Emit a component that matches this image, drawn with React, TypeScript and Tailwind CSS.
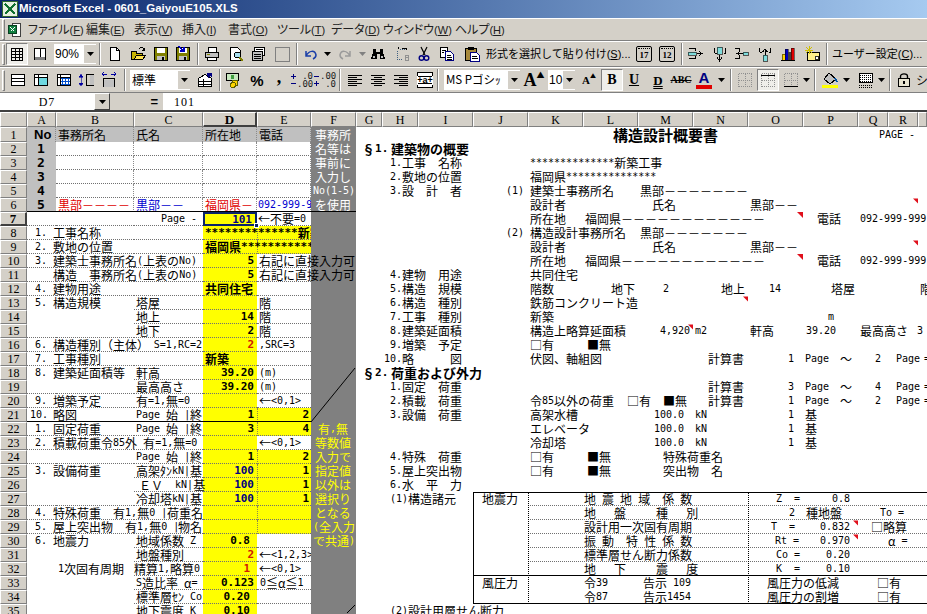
import React from "react";

const starts = [0, 27, 56, 134, 203, 257, 311, 356, 382, 418, 473, 528, 583, 638, 693, 748, 803, 858, 888, 918];
const letters = ["", "A", "B", "C", "D", "E", "F", "G", "H", "I", "J", "K", "L", "M", "N", "O", "P", "Q", "R", ""];
const colOf = (x: number) => {
  let i = 0;
  for (let k = 0; k < starts.length; k++) if (x >= starts[k]) i = k;
  return i;
};

function Mixed({ t, bold }: { t: string; bold?: boolean }) {
  const parts = t.split(/([\x20-\x7e]+)/).filter(Boolean);
  return (
    <>
      {parts.map((p, i) =>
        /^[\x20-\x7e]+$/.test(p) ? (
          <span key={i} className={bold ? "font-['DejaVu_Sans_Mono'] text-[11px] font-bold" : "font-['DejaVu_Sans_Mono'] text-[10px]"}>{p}</span>
        ) : (
          <span key={i}>{p}</span>
        )
      )}
    </>
  );
}

type TP = { r: number; x: number; t?: string; c?: string; b?: boolean; children?: React.ReactNode };
function T({ r, x, t, c, b, children }: TP) {
  const i = colOf(x);
  return (
    <div
      className={"flex items-center whitespace-pre min-w-0 leading-[14px] " + (b ? "font-bold " : "") + (c || "")}
      style={{ gridRow: r + 1, gridColumn: i + 1, paddingLeft: x - starts[i] }}
    >
      {t ? <Mixed t={t} bold={b} /> : children}
    </div>
  );
}
function R({ r, x, t, c, b }: TP) {
  const i = colOf(x - 1);
  const end = i + 1 < starts.length ? starts[i + 1] : 927;
  return (
    <div
      className={"flex items-center justify-end whitespace-pre min-w-0 leading-[14px] " + (b ? "font-bold " : "") + (c || "")}
      style={{ gridRow: r + 1, gridColumn: i + 1, paddingRight: end - x }}
    >
      <Mixed t={t || ""} bold={b} />
    </div>
  );
}
function Tri({ r, x }: { r: number; x: number }) {
  return (
    <T r={r} x={x} c="items-start">
      <svg width="6" height="6" viewBox="0 0 6 6" className="block"><path d="M0 0H6V6Z" fill="#e0101c" /></svg>
    </T>
  );
}

/* background of one sheet cell */
function Bg({ r, col, c }: { r: number; col: number; c: string }) {
  return <div className={"min-w-0 " + c} style={{ gridRow: r + 1, gridColumn: col + 1 }} />;
}

const Sep = ({ c = "" }: { c?: string }) => <div className={"w-[2px] h-[22px] shrink-0 border-l border-r border-l-[#808080] border-r-white " + c} />;
const Grip = ({ c = "" }: { c?: string }) => <div className={"w-[3px] h-[21px] shrink-0 border border-t-white border-l-white border-r-[#808080] border-b-[#808080] " + c} />;
const Slot = ({ c = "", children }: { c?: string; children?: React.ReactNode }) => <div className={"h-[22px] shrink-0 flex items-center justify-center " + (c.includes("w-[") ? c : "w-[22px] " + c)}>{children}</div>;
const Pressed = ({ c = "", children }: { c?: string; children?: React.ReactNode }) => (
  <div className={"w-[22px] h-[22px] shrink-0 flex items-center justify-center bg-[#efeeea] border border-t-[#808080] border-l-[#808080] border-r-white border-b-white " + c}>{children}</div>
);
const Ico = ({ children, w = 16 }: { children: React.ReactNode; w?: number }) => (
  <svg width={w} height="16" viewBox={`0 0 ${w} 16`} fill="none" shapeRendering="crispEdges" className="block">{children}</svg>
);
const Drop = () => <svg width="7" height="4" viewBox="0 0 7 4" className="block"><path d="M0 0H7L3.5 4Z" fill="#000" /></svg>;
const DropG = () => <svg width="7" height="4" viewBox="0 0 7 4" className="block"><path d="M0 0H7L3.5 4Z" fill="#808080" /></svg>;
const ComboBtn = () => <div className="w-[12px] h-[18px] bg-[#d4d0c8] flex items-center justify-center shrink-0"><Drop /></div>;

const IGrid = () => <Ico><path d="M2 2.5H14M2 5.5H14M2 8.5H14M2 11.5H14M2 14.5H14M2.5 2V15M6.5 2V15M10.5 2V15M13.5 2V15" stroke="#000" /></Ico>;
const IBook = () => <Ico><rect x="2.5" y="2.5" width="11" height="11" fill="#fff" stroke="#000" /><path d="M8 2V11" stroke="#000" /><rect x="3" y="11" width="10" height="3" fill="#808080" /></Ico>;
const INew = () => <Ico><path d="M3.5 1.5H9.5L12.5 4.5V14.5H3.5Z" fill="#fff" stroke="#000" /><path d="M9.5 1.5V4.5H12.5" stroke="#000" /></Ico>;
const IOpen = () => <Ico><path d="M1.5 5.5H6.5V7.5H12.5V13.5H1.5Z" fill="#c8b400" stroke="#000" /><path d="M4 13.5L6.5 9.5H15.5L12.5 13.5Z" fill="#ffe14d" stroke="#000" /><path d="M9 3C11 1 13 1 14 3.5M14 1.5V4H11.5" stroke="#000" /></Ico>;
const IFloppy = () => <><rect x="1.5" y="1.5" width="13" height="13" fill="#808000" stroke="#000" /><rect x="4" y="2" width="8" height="5" fill="#fff" /><rect x="4" y="10" width="8" height="4" fill="#c0c0c0" /><rect x="9" y="11" width="2" height="3" fill="#000" /></>;
const ISave = () => <Ico><IFloppy /></Ico>;
const ISaveAs = () => <Ico><IFloppy /><path d="M3 0L9 5M9 1V5H5" stroke="#0000c0" strokeWidth="1.6" /></Ico>;
const IPrint = () => <Ico><path d="M4.5 1.5H12.5V6.5H4.5Z" fill="#fff" stroke="#000" /><path d="M1.5 6.5H14.5V11.5H1.5Z" fill="#c0c0c0" stroke="#000" /><path d="M3.5 11.5H12.5V14.5H3.5Z" fill="#fff" stroke="#000" /><path d="M3 8.5H6" stroke="#808000" /></Ico>;
const IPrev = () => <Ico><path d="M2.5 1.5H9.5L12.5 4.5V14.5H2.5Z" fill="#fff" stroke="#000" /><circle cx="9.5" cy="9" r="3" fill="#a8e0f0" stroke="#000" /><path d="M11.5 11.5L15 15" stroke="#808000" strokeWidth="2" /></Ico>;
const IStack = () => <Ico><path d="M4.5 1.5H14.5V9.5H4.5Z" fill="#fff" stroke="#000" /><path d="M2.5 5.5H12.5V14.5H2.5Z" fill="#c0c0c0" stroke="#000" /><path d="M4 8H11M4 10H11M4 12H11M6 3.5H13" stroke="#000" /></Ico>;
const IUndo = ({ col = "#1a3ea8" }: { col?: string }) => <Ico><path d="M3 5V10H8M3 10C6 4 12 4 13 9C13 11 12 12 10 13" stroke={col} strokeWidth="1.5" fill="none" shapeRendering="auto" /></Ico>;
const IRedo = () => <Ico><path d="M13 5V10H8M13 10C10 4 4 4 3 9C3 11 4 12 6 13" stroke="#9a9a9a" strokeWidth="1.5" fill="none" shapeRendering="auto" /></Ico>;
const IBino = () => <Ico><path d="M3 3H6V6H10V3H13V6L15 13H9.5V8H6.5V13H1L3 6Z" fill="#000" /><rect x="3" y="10" width="2" height="2" fill="#c0c0c0" /><rect x="11" y="10" width="2" height="2" fill="#c0c0c0" /></Ico>;
const ISel = () => <Ico><path d="M3 8A5 5 0 0 1 12 5" stroke="#406080" strokeDasharray="1 1" /><path d="M3 9V13H8" stroke="#406080" strokeDasharray="1 1" /><path d="M8 2H12V4M4 3V1" stroke="#000" /><path d="M11 9H14V14H11ZM11 11.5H14" stroke="#909090" /></Ico>;
const IScis = () => <Ico><path d="M5 1L9 9M11 1L7 9" stroke="#000" strokeWidth="1.2" shapeRendering="auto" /><circle cx="5.5" cy="12" r="2.3" stroke="#000080" strokeWidth="1.4" shapeRendering="auto" /><circle cx="10.5" cy="12" r="2.3" stroke="#000080" strokeWidth="1.4" shapeRendering="auto" /></Ico>;
const ICopy = () => <Ico><path d="M1.5 1.5H8.5V11.5H1.5Z" fill="#fff" stroke="#000" /><path d="M6.5 5.5H11.5L14.5 8.5V14.5H6.5Z" fill="#fff" stroke="#000080" /><path d="M3 4H7M3 6H5M8 9H12M8 11H13M8 13H13" stroke="#000" /></Ico>;
const IPaste = () => <Ico><path d="M1.5 2.5H12.5V14.5H1.5Z" fill="#a88a3c" stroke="#000" /><rect x="4" y="1" width="6" height="3" fill="#000" /><path d="M6.5 6.5H12.5L15.5 9.5V15.5H6.5Z" fill="#fff" stroke="#000080" /><path d="M8 10H13M8 12H14" stroke="#000" /></Ico>;
const ICal = ({ n }: { n: string }) => (
  <div className="w-[16px] h-[16px] border border-black bg-[#d4d0c8] relative flex items-center justify-center rounded-[2px] font-['Liberation_Serif'] font-bold text-[9px] leading-none">
    <div className="absolute top-[1px] left-[1px] right-[1px] h-[2px] border-t border-dotted border-black" />
    <span className="mt-[3px]">{n}</span>
  </div>
);
const IInsR = () => <Ico><path d="M1.5 2.5H8.5M1.5 12.5H8.5M8.5 2.5V5M8.5 10V12.5" stroke="#000" /><rect x="1" y="6" width="8" height="3" fill="#7fdcdc" stroke="#000" strokeWidth=".6" /><path d="M10 7.5H14M12 5.5L15 7.5L12 9.5" stroke="#000" /></Ico>;
const IInsD = () => <Ico><path d="M2.5 1.5V7M13.5 1.5V7M2.5 7H4.5M11.5 7H13.5" stroke="#000" /><rect x="5" y="1" width="5" height="7" fill="#7fdcdc" stroke="#000" strokeWidth=".6" /><path d="M7.5 9V14M5 11.5L7.5 15L10 11.5" stroke="#000" /></Ico>;
const IOutL = () => <Ico><path d="M6.5 2.5H1.5M6.5 12.5H1.5M6.5 2.5V5M6.5 10V12.5" stroke="#000" /><rect x="10" y="6" width="5" height="3" fill="#7fdcdc" stroke="#000" strokeWidth=".6" /><path d="M10 7.5H4M7 5.5L4 7.5L7 9.5" stroke="#000" /></Ico>;
const IOutU = () => <Ico><path d="M2.5 1.5V6M13.5 1.5V6M2.5 6H4.5M11.5 6H13.5" stroke="#000" /><rect x="6" y="9" width="4" height="6" fill="#7fdcdc" stroke="#000" strokeWidth=".6" /><path d="M8 4V9M5.5 6L8 3L10.5 6" stroke="#000" /></Ico>;
const IChart = () => <Ico><rect x="1" y="14" width="14" height="1" fill="#000" /><rect x="2" y="8" width="3" height="6" fill="#ffd500" stroke="#000" strokeWidth=".5" /><rect x="5" y="3" width="3" height="11" fill="#0000c0" stroke="#000" strokeWidth=".5" /><rect x="8" y="6" width="3" height="8" fill="#404040" /><rect x="11" y="2" width="3" height="12" fill="#e00000" stroke="#000" strokeWidth=".5" /></Ico>;
const IStar = () => <Ico><rect x="3.5" y="6.5" width="12" height="8" fill="#fff08a" stroke="#000" /><path d="M5 0V8M1 4H9M2 1L8 7M8 1L2 7" stroke="#d0c000" /><rect x="11" y="10" width="3" height="3" fill="#fff" stroke="#000" strokeWidth=".8" /></Ico>;
const IRows = () => <Ico><rect x="1.5" y="2.5" width="13" height="11" fill="#fff" stroke="#000" /><path d="M2 6.5H14M2 9.5H14" stroke="#000" /></Ico>;
const ICyan = () => <Ico><rect x="1.5" y="2.5" width="13" height="11" fill="#fff" stroke="#000" /><rect x="5" y="6" width="9" height="7" fill="#6fd8e0" /><path d="M2 5.5H14M5 3V13" stroke="#000" /></Ico>;
const IBlue = () => <Ico><rect x="1.5" y="2.5" width="13" height="11" fill="#fff" stroke="#000" /><path d="M5 6H14M5 9H14M5 12H14M6 6V13M9 6V13M12 6V13" stroke="#0050d0" /><path d="M2 5.5H14M4.5 3V13" stroke="#000" /></Ico>;
const IColW = () => <Ico><path d="M2 2L4 5H0ZM2 14L4 11H0ZM2 5V11" fill="#0000a0" stroke="#0000a0" strokeWidth=".6" /><path d="M7.5 2.5H14.5V13.5H7.5Z" fill="#d4d0c8" stroke="#000" /><rect x="11" y="3" width="4" height="10" fill="#c0c0c0" /></Ico>;
const IRowH = () => <Ico><path d="M1 2H6M3 0L1 2L3 4M15 2H10M13 0L15 2L13 4" stroke="#0000a0" /><path d="M2.5 15V6.5H13.5V15" stroke="#000" /><rect x="3" y="8" width="10" height="7" fill="#c0c0c0" /></Ico>;
const IFmt = () => <Ico><path d="M1.5 6.5L8 2.5L14.5 6.5V14.5H1.5Z" fill="#fff" stroke="#000" /><path d="M1.5 9.5H14.5M1.5 12H14.5M6.5 7V14.5" stroke="#000" /><path d="M10 1H15V5H14V3L11 6Z" fill="#000080" /></Ico>;
const ICoin = () => <Ico><rect x="1.5" y="1.5" width="12" height="7" fill="#c8e8c0" stroke="#000" /><circle cx="7.5" cy="5" r="2" fill="#40a040" /><circle cx="10" cy="11" r="3" fill="#ffd500" stroke="#606000" /><circle cx="8" cy="13" r="2.5" fill="#ffd500" stroke="#606000" /></Ico>;
const DecBtn = ({ a, b, up }: { a: string; b: string; up: boolean }) => (
  <div className="flex items-center gap-[1px]">
    <svg width="5" height="16" viewBox="0 0 5 16" className="block shrink-0" shapeRendering="crispEdges">
      <path d={up ? "M2 2H3V4H5V5H3V7H2V5H0V4H2ZM0 11H5V12H0Z" : "M0 4H5V5H0ZM2 9H3V11H5V12H3V14H2V12H0V11H2Z"} fill="#000080" />
    </svg>
    <div className="font-['DejaVu_Sans_Mono'] text-[9px] leading-[8px] text-right text-[#202020] w-[16px]">
      <div>{a}</div><div>{b}</div>
    </div>
  </div>
);
const IAlign = ({ k }: { k: "l" | "c" | "r" }) => {
  const ds = { l: "M1 3H15M1 5H10M1 7H15M1 9H10M1 11H15M1 13H10", c: "M1 3H15M4 5H12M1 7H15M4 9H12M1 11H15M4 13H12", r: "M1 3H15M6 5H15M1 7H15M6 9H15M1 11H15M6 13H15" };
  return <Ico><path d={ds[k]} stroke="#000" /></Ico>;
};
const IMerge = () => (
  <div className="relative w-[16px] h-[16px] border border-black bg-white flex items-center justify-center">
    <div className="absolute inset-x-0 top-[3px] border-t border-black" /><div className="absolute inset-x-0 bottom-[3px] border-t border-black" />
    <span className="text-[9px] font-bold leading-none bg-white font-['Liberation_Sans']">+a+</span>
  </div>
);
const IBorderDots = ({ line = "" }: { line?: string }) => (
  <Ico>
    <path d="M1.5 1.5V14.5M8 1.5V14.5M14.5 1.5V14.5M1.5 1.5H14.5M1.5 8H14.5M1.5 14.5H14.5" stroke="#909090" strokeDasharray="1 1" />
    {line && <path d={line} stroke="#000" />}
  </Ico>
);
const IBucket = () => <Ico><path d="M7 1L14 7L8 12L2 7Z" fill="#c0c0c0" stroke="#000" /><path d="M13 6L15 10" stroke="#0050a0" strokeWidth="2" /><rect x="0" y="13" width="16" height="3" fill="#ffff00" /></Ico>;
const IPattern = () => <Ico><rect x="1.5" y="1.5" width="13" height="9" fill="#fff" stroke="#000" /><path d="M2 3H14M2 5H14M2 7H14M2 9H14" stroke="#000" strokeDasharray="1 1" /><path d="M1 13H15M1 15H15" stroke="#000" strokeDasharray="1 1" /></Ico>;
const ILock = () => <Ico><path d="M4.5 7V4.5C4.5 1 11.5 1 11.5 4.5V7" stroke="#000" strokeWidth="1.4" shapeRendering="auto" /><rect x="2.5" y="6.5" width="11" height="8" fill="#e8e4d0" stroke="#000" /><path d="M8 9V12" stroke="#000" strokeWidth="2" /></Ico>;

const M = ({ a, k }: { a: string; k: string }) => (
  <span className="whitespace-nowrap">{a}<span className="font-['Liberation_Sans'] text-[11px]">(<span className="underline">{k}</span>)</span></span>
);

const yellow = "bg-[#ffff00]";
const dot = "border-b border-dotted border-b-[#707070]";

/* rows in which only C..E have a rule at the bottom */
const partial = new Set([13, 14, 18, 25, 26, 30, 31, 32, 33, 34]);
const yE = new Set([8, 9, 21, 22, 24, 25, 26, 27, 28, 29]);

function LeftBackgrounds() {
  const out: React.ReactNode[] = [];
  for (let col = 1; col <= 5; col++) out.push(<Bg key={"h" + col} r={1} col={col} c="bg-[#c0c0c0] border-r border-dotted border-r-[#8a8a8a]" />);
  for (let r = 2; r <= 6; r++) {
    out.push(<Bg key={"a" + r} r={r} col={1} c="bg-[#c0c0c0]" />);
    for (let col = 2; col <= 5; col++) out.push(<Bg key={r + "-" + col} r={r} col={col} c={"bg-white border-r border-r-[#8a8a8a] border-dotted " + dot} />);
  }
  for (let r = 7; r <= 35; r++) {
    const ab = partial.has(r) ? "" : dot;
    out.push(<Bg key={"A" + r} r={r} col={1} c={"bg-white " + ab} />);
    out.push(<Bg key={"B" + r} r={r} col={2} c={"bg-white " + ab} />);
    out.push(<Bg key={"C" + r} r={r} col={3} c={"bg-white " + dot} />);
    out.push(<Bg key={"D" + r} r={r} col={4} c={yellow + " " + dot} />);
    out.push(<Bg key={"E" + r} r={r} col={5} c={(yE.has(r) ? yellow + " border-l border-l-[#8a8a50] " : "bg-white ") + dot} />);
  }
  return <>{out}</>;
}

function SheetLeftText() {
  const blue = "text-[#000080]";
  const red = "text-[#d02000]";
  return (
    <>
      <T r={1} x={34} c="font-['Liberation_Sans'] font-bold text-[13px]"><span>No</span></T>
      <T r={1} x={58} t="事務所名" />
      <T r={1} x={136} t="氏名" />
      <T r={1} x={205} t="所在地" />
      <T r={1} x={259} t="電話" />
      {[1, 2, 3, 4, 5].map((n) => (
        <T key={n} r={n + 1} x={37} c="font-['DejaVu_Sans_Mono'] font-bold text-[13px]"><span>{n}</span></T>
      ))}
      <T r={6} x={58} t="黒部－－－－" c="text-[#e00000]" />
      <T r={6} x={136} t="黒部－－" c="text-[#0000d0]" />
      <T r={6} x={205} t="福岡県－" c="text-[#e00000]" />
      <T r={6} x={258} t="092-999-9" c="text-[#0000d0]" />

      <R r={7} x={197} t="Page -" />
      <T r={7} x={258} t="←不要=0" />
      <T r={8} x={35} t="1." /><T r={8} x={53} t="工事名称" />
      <T r={8} x={205} t="**************新築工事" b />
      <T r={9} x={35} t="2." /><T r={9} x={53} t="敷地の位置" />
      <T r={9} x={205} t="福岡県**************" b />
      <T r={10} x={35} t="3." /><T r={10} x={53} t="建築士事務所名(上表のNo)" />
      <R r={10} x={254} t="5" b />
      <T r={11} x={53} t="構造  事務所名(上表のNo)" />
      <R r={11} x={254} t="5" b />
      <T r={12} x={35} t="4." /><T r={12} x={53} t="建物用途" />
      <T r={12} x={205} t="共同住宅" b />
      <T r={13} x={35} t="5." /><T r={13} x={53} t="構造規模" />
      <T r={13} x={136} t="塔屋" /><T r={13} x={259} t="階" />
      <T r={14} x={136} t="地上" /><R r={14} x={254} t="14" b /><T r={14} x={259} t="階" />
      <T r={15} x={136} t="地下" /><R r={15} x={254} t="2" b /><T r={15} x={259} t="階" />
      <T r={16} x={35} t="6." /><T r={16} x={53} t="構造種別（主体）" />
      <R r={16} x={202} t="S=1,RC=2" />
      <R r={16} x={254} t="2" b c={red} /><T r={16} x={259} t=",SRC=3" />
      <T r={17} x={35} t="7." /><T r={17} x={53} t="工事種別" /><T r={17} x={205} t="新築" b />
      <T r={18} x={35} t="8." /><T r={18} x={53} t="建築延面積等" />
      <T r={18} x={136} t="軒高" /><R r={18} x={254} t="39.20" b /><T r={18} x={259} t="(m)" />
      <T r={19} x={136} t="最高高さ" /><R r={19} x={254} t="39.20" b /><T r={19} x={259} t="(m)" />
      <T r={20} x={35} t="9." /><T r={20} x={53} t="増築予定" />
      <T r={20} x={136} t="有=1,無=0" /><T r={20} x={259} t="←<0,1>" />
      <T r={21} x={30} t="10." /><T r={21} x={53} t="略図" />
      <T r={21} x={136} t="Page 始 |" /><T r={21} x={190} t="終" />
      <R r={21} x={254} t="1" b /><R r={21} x={309} t="2" b />
      <T r={22} x={35} t="1." /><T r={22} x={53} t="固定荷重" />
      <T r={22} x={136} t="Page 始 |" /><T r={22} x={190} t="終" />
      <R r={22} x={254} t="3" b /><R r={22} x={309} t="4" b />
      <T r={23} x={35} t="2." /><T r={23} x={53} t="積載荷重令85外 有=1,無=0" />
      <T r={23} x={259} t="←<0,1>" />
      <T r={24} x={136} t="Page 始 |" /><T r={24} x={190} t="終" />
      <R r={24} x={254} t="1" b /><R r={24} x={309} t="2" b />
      <T r={25} x={35} t="3." /><T r={25} x={53} t="設備荷重" />
      <T r={25} x={136} t="高架ﾀﾝkN|基" /><R r={25} x={254} t="100" b c={blue} /><R r={25} x={309} t="1" b />
      <T r={26} x={139} t="ＥＶ  kN|基" /><R r={26} x={254} t="100" b c={blue} /><R r={26} x={309} t="1" b />
      <T r={27} x={136} t="冷却塔kN|基" /><R r={27} x={254} t="100" b c={blue} /><R r={27} x={309} t="1" b />
      <T r={28} x={35} t="4." /><T r={28} x={53} t="特殊荷重  有1,無0 |" /><T r={28} x={167} t="荷重名" />
      <T r={29} x={35} t="5." /><T r={29} x={53} t="屋上突出物  有1,無0 |" /><T r={29} x={178} t="物名" />
      <T r={30} x={35} t="6." /><T r={30} x={53} t="地震力" />
      <T r={30} x={136} t="地域係数 Z" /><R r={30} x={250} t="0.8" b />
      <T r={31} x={136} t="地盤種別" /><R r={31} x={254} t="2" b c={red} /><T r={31} x={259} t="←<1,2,3>" />
      <T r={32} x={58} t="1次固有周期" /><T r={32} x={134} t="精算1,略算0" /><R r={32} x={250} t="1" b c={red} /><T r={32} x={259} t="←<0,1>" />
      <T r={33} x={136} t="S造比率 α=" /><R r={33} x={254} t="0.123" b /><T r={33} x={260} t="0≦α≦1" />
      <T r={34} x={136} t="標準層ｾﾝ Co" /><R r={34} x={250} t="0.20" b />
      <T r={35} x={136} t="地下震度 K" /><R r={35} x={250} t="0.10" b />
    </>
  );
}

function ColumnF() {
  const w = "text-white";
  const y = "text-[#ffff00]";
  return (
    <>
      <div className="bg-[#808080]" style={{ gridRow: "2 / -1", gridColumn: 7 }} />
      {["事務所", "名等は", "事前に", "入力し", "No(1-5)", "を使用"].map((s, i) => <T key={s} r={i + 1} x={s.startsWith("No") ? 313 : 315} t={s} c={w} />)}
      {["有,無", "等数値", "入力で", "指定値", "以外は", "選択り", "となる", "(全入力", "で共通)"].map((s, i) => (
        <T key={s} r={22 + i} x={i === 0 ? 318 : i >= 7 ? 313 : 315} t={s} c={y} />
      ))}
      <div className="relative" style={{ gridRow: "19 / 23", gridColumn: 7 }}>
        <svg className="absolute inset-0" width="45" height="56" viewBox="0 0 45 56"><path d="M0 56L44 2" stroke="#000" strokeWidth="1" /></svg>
      </div>
      <div className="relative" style={{ gridRow: 36, gridColumn: 7 }}>
        <svg className="absolute inset-0" width="45" height="14" viewBox="0 0 45 14"><path d="M36 9L44 1" stroke="#000" strokeWidth="1" /></svg>
      </div>
      <T r={10} x={259} t="右記に直接入力可" />
      <T r={11} x={259} t="右記に直接入力可" />
    </>
  );
}

function RightForm() {
  const pageRow = (r: number, a: string, b: string) => (
    <>
      <T r={r} x={708} t="計算書" /><T r={r} x={788} t={a} /><T r={r} x={805} t="Page" /><T r={r} x={840} t="～" /><T r={r} x={875} t={b} /><T r={r} x={896} t="Page" /><T r={r} x={924} t="=" />
    </>
  );
  const office = (r: number, n: string, head: string) => (
    <>
      <T r={r} x={506} t={n} /><T r={r} x={530} t={head} /><T r={r} x={640} t="黒部－－－－－－－" />
      <T r={r + 1} x={530} t="設計者" /><T r={r + 1} x={652} t="氏名" /><T r={r + 1} x={750} t="黒部－－" /><Tri r={r + 1} x={913} />
      <T r={r + 2} x={530} t="所在地" /><T r={r + 2} x={585} t="福岡県－－－－－－－－－－－－" /><Tri r={r + 2} x={797} />
      <T r={r + 2} x={817} t="電話" /><T r={r + 2} x={860} t="092-999-999" />
    </>
  );
  return (
    <>
      <T r={1} x={613} c="text-[15px] font-bold"><span>構造設計概要書</span></T>
      <T r={1} x={879} t="PAGE -" />
      <T r={2} x={362} t="§1." b c="text-[13px]" /><T r={2} x={391} c="text-[13px] font-bold"><span>建築物の概要</span></T>
      <T r={3} x={390} t="1.工事　名称" /><T r={3} x={530} t="**************新築工事" />
      <T r={4} x={390} t="2.敷地の位置" /><T r={4} x={530} t="福岡県***************" />
      <T r={5} x={390} t="3.設　計　者" />
      {office(5, "(1)", "建築士事務所名")}
      {office(8, "(2)", "構造設計事務所名")}
      <T r={11} x={390} t="4.建物　用途" /><T r={11} x={530} t="共同住宅" />
      <T r={12} x={390} t="5.構造　規模" /><T r={12} x={530} t="階数" /><T r={12} x={611} t="地下" /><T r={12} x={663} t="2" />
      <T r={12} x={721} t="地上" /><T r={12} x={769} t="14" /><T r={12} x={831} t="塔屋" /><T r={12} x={920} t="階" />
      <T r={13} x={390} t="6.構造　種別" /><T r={13} x={530} t="鉄筋コンクリート造" /><Tri r={13} x={743} />
      <T r={14} x={390} t="7.工事　種別" /><T r={14} x={530} t="新築" /><T r={14} x={828} t="m" />
      <T r={15} x={390} t="8.建築延面積" /><T r={15} x={530} t="構造上略算延面積" /><T r={15} x={660} t="4,920" /><Tri r={15} x={688} />
      <T r={15} x={695} t="m2" /><T r={15} x={750} t="軒高" /><T r={15} x={806} t="39.20" /><T r={15} x={860} t="最高高さ" /><T r={15} x={917} t="3" />
      <T r={16} x={390} t="9.増築　予定" /><T r={16} x={530} t="□有" /><T r={16} x={587} t="■無" />
      <T r={17} x={384} t="10.略　　　図" /><T r={17} x={530} t="伏図、軸組図" />{pageRow(17, "1", "2")}
      <T r={18} x={362} t="§2." b c="text-[13px]" /><T r={18} x={391} c="text-[13px] font-bold"><span>荷重および外力</span></T>
      <T r={19} x={390} t="1.固定　荷重" />{pageRow(19, "3", "4")}
      <T r={20} x={390} t="2.積載　荷重" /><T r={20} x={530} t="令85以外の荷重" /><T r={20} x={627} t="□有" /><T r={20} x={663} t="■無" />{pageRow(20, "1", "2")}
      <T r={21} x={390} t="3.設備　荷重" />
      {[["高架水槽", 21], ["エレベータ", 22], ["冷却塔", 23]].map(([s, r]) => (
        <React.Fragment key={r as number}>
          <T r={r as number} x={530} t={s as string} /><T r={r as number} x={654} t="100.0" /><T r={r as number} x={695} t="kN" /><T r={r as number} x={788} t="1" /><T r={r as number} x={805} t="基" />
        </React.Fragment>
      ))}
      <T r={24} x={390} t="4.特殊　荷重" /><T r={24} x={530} t="□有" /><T r={24} x={587} t="■無" /><T r={24} x={663} t="特殊荷重名" />
      <T r={25} x={390} t="5.屋上突出物" /><T r={25} x={530} t="□有" /><T r={25} x={587} t="■無" /><T r={25} x={663} t="突出物　名" />
      <T r={26} x={390} t="6.水　平　力" />
      <T r={27} x={390} t="(1)構造諸元" />
      <T r={35} x={390} t="(2)設計用層せん断力" />

      {/* table */}
      {[27, 28, 29, 30, 31].map((r) => <div key={r} className={dot} style={{ gridRow: r + 1, gridColumn: "12 / -1" }} />)}
      <div className="border-b border-black" style={{ gridRow: 33, gridColumn: "11 / -1" }} />
      <div className="border-l border-dotted border-l-black" style={{ gridRow: "28 / 36", gridColumn: 12 }} />
      <div className="border-l border-dotted border-l-black" style={{ gridRow: "28 / 36", gridColumn: 16 }} />
      <div className="border-l border-t border-b border-black" style={{ gridRow: "28 / 36", gridColumn: "11 / -1" }} />

      <T r={27} x={482} t="地震力" /><T r={27} x={584} t="地 震 地 域  係 数" /><T r={27} x={776} t="Z  =" /><T r={27} x={832} t="0.8" />
      <T r={28} x={584} t="地　 盤　　 種　 別" /><T r={28} x={789} t="2" /><T r={28} x={806} t="種地盤" /><T r={28} x={880} t="To =" />
      <T r={29} x={584} t="設計用一次固有周期" /><T r={29} x={771} t="T  =" /><T r={29} x={820} t="0.832" /><Tri r={29} x={853} /><T r={29} x={871} t="□略算" />
      <T r={30} x={584} t="振 動  特 性 係 数" /><T r={30} x={775} t="Rt =" /><T r={30} x={820} t="0.970" /><Tri r={30} x={853} /><T r={30} x={888} t="α =" />
      <T r={31} x={584} t="標準層せん断力係数" /><T r={31} x={776} t="Co =" /><T r={31} x={826} t="0.20" />
      <T r={32} x={584} t="地　 下　　 震　 度" /><T r={32} x={776} t="K  =" /><T r={32} x={826} t="0.10" />
      <T r={33} x={482} t="風圧力" /><T r={33} x={584} t="令39" /><T r={33} x={643} t="告示 109" /><T r={33} x={767} t="風圧力の低減" /><T r={33} x={877} t="□有" />
      <T r={34} x={584} t="令87" /><T r={34} x={643} t="告示1454" /><T r={34} x={767} t="風圧力の割増" /><T r={34} x={877} t="□有" />
    </>
  );
}

function Sheet() {
  const hdr = "flex items-center justify-center bg-[#d4d0c8] border-r border-b border-t border-l border-t-white border-l-white border-r-[#808080] border-b-[#808080] font-['Liberation_Serif'] text-[12px] leading-none";
  const hdrOn = "flex items-center justify-center bg-[#d4d0c8] border border-t-white border-l-white border-r-[#404040] border-b-[#404040] border-r-2 border-b-2 font-['Liberation_Serif'] text-[13px] font-bold leading-none";
  return (
    <div className="grid grid-cols-[27px_29px_78px_69px_54px_54px_45px_26px_36px_55px_55px_55px_55px_55px_55px_55px_55px_30px_30px_9px] grid-rows-[15px_15px_repeat(34,14px)] text-[12px] text-black bg-white font-['Noto_Sans_CJK_JP',sans-serif]">
      {letters.map((l, i) => (
        <div key={i} className={i === 4 ? hdrOn : hdr} style={{ gridRow: 1, gridColumn: i + 1 }}>{l}</div>
      ))}
      {Array.from({ length: 35 }, (_, i) => (
        <div key={i} className={i === 6 ? hdrOn : hdr} style={{ gridRow: i + 2, gridColumn: 1 }}>{i + 1}</div>
      ))}
      <LeftBackgrounds />
      <SheetLeftText />
      <ColumnF />
      <div className="border-b border-black" style={{ gridRow: 7, gridColumn: "2 / 8" }} />
      <div className="border-b border-black" style={{ gridRow: 22, gridColumn: "2 / 7" }} />
      <div className="relative flex items-center justify-end pr-[3px] border-2 border-[#0a246a] bg-[#ffff00] text-[#000080]" style={{ gridRow: 8, gridColumn: 5 }}>
        <span className="font-['DejaVu_Sans_Mono'] text-[11px] font-bold leading-none">101</span>
        <div className="absolute right-[-4px] bottom-[-4px] w-[5px] h-[5px] bg-[#0a246a] border border-white" />
      </div>
      <RightForm />
    </div>
  );
}

export default function App() {
  return (
    <div className="w-[927px] h-[614px] overflow-hidden bg-[#d4d0c8] font-['Noto_Sans_CJK_JP',sans-serif] text-black flex flex-col">
      {/* title bar */}
      <div className="h-[18px] shrink-0 flex items-center bg-gradient-to-r from-[#0a246a] to-[#a6caf0]">
        <svg width="16" height="16" viewBox="0 0 16 16" className="ml-[2px] shrink-0" shapeRendering="crispEdges">
          <rect x="0.5" y="0.5" width="15" height="15" fill="#e8f0e0" stroke="#306830" />
          <path d="M3 3L13 13M13 3L3 13" stroke="#107030" strokeWidth="2.6" />
        </svg>
        <span className="ml-[1px] text-white font-bold text-[11.5px] leading-none font-['Liberation_Sans']">Microsoft Excel - 0601_GaiyouE105.XLS</span>
      </div>

      {/* menu bar */}
      <div className="h-[23px] shrink-0 flex items-center border-t border-t-white border-b border-b-[#808080] text-[12px] leading-none text-[#202020] [font-feature-settings:'palt']">
        <Grip c="ml-[2px]" />
        <div className="ml-[2px] w-[16px] h-[16px] shrink-0">
          <svg width="16" height="16" viewBox="0 0 16 16" shapeRendering="crispEdges">
            <path d="M5.5 1.5H13.5V14.5H5.5Z" fill="#fff" stroke="#404040" />
            <rect x="1.5" y="3.5" width="8" height="8" fill="#108040" stroke="#084020" />
            <path d="M3.5 5.5L7.5 9.5M7.5 5.5L3.5 9.5" stroke="#fff" />
          </svg>
        </div>
        <div className="ml-[5px] w-[58px] shrink-0"><M a="ファイル" k="F" /></div>
        <div className="w-[48px] shrink-0"><M a="編集" k="E" /></div>
        <div className="w-[48px] shrink-0"><M a="表示" k="V" /></div>
        <div className="w-[46px] shrink-0"><M a="挿入" k="I" /></div>
        <div className="w-[49px] shrink-0"><M a="書式" k="O" /></div>
        <div className="w-[54px] shrink-0"><M a="ツール" k="T" /></div>
        <div className="w-[52px] shrink-0"><M a="データ" k="D" /></div>
        <div className="w-[72px] shrink-0"><M a="ウィンドウ" k="W" /></div>
        <div className="shrink-0"><M a="ヘルプ" k="H" /></div>
      </div>

      {/* standard toolbar */}
      <div className="h-[26px] shrink-0 flex items-center border-t border-t-white border-b border-b-[#808080] text-[12px] leading-none">
        <Grip c="ml-[2px]" />
        <Pressed c="ml-[1px]"><IGrid /></Pressed>
        <Slot c="w-[24px]"><IBook /></Slot>
        <div className="ml-[2px] w-[42px] h-[20px] bg-white flex items-center justify-between shrink-0 pl-[1px]">
          <span className="font-['Liberation_Sans'] text-[12px]">90%</span><ComboBtn />
        </div>
        <Sep c="ml-[3px]" />
        <Slot c="ml-[3px]"><INew /></Slot>
        <Slot c="w-[23px]"><IOpen /></Slot>
        <Slot c="w-[24px]"><ISave /></Slot>
        <Slot c="w-[20px]"><ISaveAs /></Slot>
        <Sep c="ml-[4px]" />
        <Slot c="ml-[2px]"><IPrint /></Slot>
        <Slot c="w-[25px]"><IPrev /></Slot>
        <Slot c="w-[20px]"><IStack /></Slot>
        <Slot c="ml-[2px] w-[24px]"><div className="w-[15px] h-[15px] border border-[#808080]" /></Slot>
        <Sep c="ml-[2px]" />
        <Slot c="ml-[2px]"><IUndo /></Slot>
        <Slot c="w-[10px]"><Drop /></Slot>
        <Slot c="ml-[2px]"><IRedo /></Slot>
        <Slot c="w-[12px]"><DropG /></Slot>
        <Slot c="w-[20px]"><IBino /></Slot>
        <Slot c="ml-[3px]"><ISel /></Slot>
        <Slot><IScis /></Slot>
        <Slot c="ml-[1px]"><ICopy /></Slot>
        <Slot c="ml-[3px]"><IPaste /></Slot>
        <div className="ml-[3px] w-[142px] shrink-0 whitespace-nowrap text-[11px]">形式を選択して貼り付け<M a="" k="S" /><span className="font-['Liberation_Sans']">...</span></div>
        <Slot c="ml-[5px]"><ICal n="17" /></Slot>
        <Slot c="ml-[1px]"><ICal n="12" /></Slot>
        <Sep c="ml-[3px]" />
        <Slot c="ml-[1px]"><IInsR /></Slot>
        <Slot c="ml-[3px]"><IInsD /></Slot>
        <Slot c="w-[20px]"><IOutL /></Slot>
        <Slot c="ml-[3px]"><IOutU /></Slot>
        <Slot c="ml-[1px]"><IChart /></Slot>
        <Slot c="ml-[2px]"><IStar /></Slot>
        <Sep c="ml-[3px]" />
        <div className="ml-[4px] whitespace-nowrap text-[11px]">ユーザー設定<M a="" k="C" /><span className="font-['Liberation_Sans']">...</span></div>
      </div>

      {/* format toolbar */}
      <div className="h-[26px] shrink-0 flex items-center border-t border-t-white border-b border-b-[#808080] text-[12px] leading-none">
        <Grip c="ml-[2px]" />
        <Slot c="ml-[2px]"><IRows /></Slot>
        <Slot c="ml-[1px]"><ICyan /></Slot>
        <Slot c="ml-[1px]"><IBlue /></Slot>
        <Slot c="ml-[1px]"><IColW /></Slot>
        <Slot><IRowH /></Slot>
        <Sep c="ml-[4px]" />
        <div className="ml-[4px] w-[60px] h-[20px] bg-white flex items-center justify-between shrink-0 pl-[2px]">
          <span>標準</span><ComboBtn />
        </div>
        <Slot c="ml-[4px]"><IFmt /></Slot>
        <Sep c="ml-[3px]" />
        <Slot c="ml-[1px]"><ICoin /></Slot>
        <Slot c="ml-[2px]"><span className="font-['Liberation_Sans'] font-bold text-[15px]">%</span></Slot>
        <Slot><span className="font-['Liberation_Serif'] font-bold text-[18px] -mt-[6px]">,</span></Slot>
        <Slot c="ml-[1px]"><DecBtn a=".0" b=".00" up /></Slot>
        <Slot c="ml-[1px]"><DecBtn a=".00" b=".0" up={false} /></Slot>
        <Sep c="ml-[3px]" />
        <Slot c="ml-[3px]"><IAlign k="l" /></Slot>
        <Slot c="ml-[1px]"><IAlign k="c" /></Slot>
        <Slot c="ml-[1px]"><IAlign k="r" /></Slot>
        <Slot c="ml-[2px]"><IMerge /></Slot>
        <Sep c="ml-[1px]" />
        <div className="ml-[5px] w-[76px] h-[20px] bg-white flex items-center justify-between shrink-0 pl-[2px] overflow-hidden">
          <span className="whitespace-nowrap text-[11.5px]">MS Pゴシｯ</span><ComboBtn />
        </div>
        <Slot c="ml-[3px]"><span className="font-['Liberation_Serif'] font-bold text-[18px]">A</span><span className="text-[8px] -mt-[10px]">▲</span></Slot>
        <div className="ml-[3px] w-[27px] h-[20px] bg-white flex items-center justify-between shrink-0 pl-[1px]">
          <span className="font-['Liberation_Sans'] text-[12px]">10</span><ComboBtn />
        </div>
        <Slot c="ml-[3px]"><span className="font-['Liberation_Serif'] font-bold text-[11px]">A</span><span className="text-[6px] -mt-[8px]">▲</span></Slot>
        <Pressed c="ml-[1px]"><span className="font-['Liberation_Serif'] font-bold text-[14px]">B</span></Pressed>
        <Slot><span className="font-['Liberation_Serif'] font-bold text-[14px] underline">U</span></Slot>
        <Slot c="ml-[2px]"><span className="font-['Liberation_Serif'] font-bold text-[13px] underline decoration-double">D</span></Slot>
        <Slot c="ml-[1px]"><span className="font-['Liberation_Serif'] font-bold text-[10px] line-through">ABC</span></Slot>
        <Slot c="ml-[1px]">
          <div className="w-[16px] flex flex-col items-center">
            <span className="font-['Liberation_Sans'] font-bold text-[15px] leading-[12px] text-[#000080]">A</span>
            <div className="mt-[1px] w-[16px] h-[4px] bg-[#e00000]" />
          </div>
        </Slot>
        <Slot c="w-[12px]"><Drop /></Slot>
        <Sep c="ml-[3px]" />
        <Slot c="ml-[2px]"><IBorderDots /></Slot>
        <Pressed c="ml-[1px]"><IBorderDots line="M1 3.5H15" /></Pressed>
        <Slot c="ml-[1px]"><IBorderDots line="M1 14.5H15" /></Slot>
        <Slot c="w-[8px]"><Drop /></Slot>
        <Sep c="ml-[4px]" />
        <Slot c="ml-[3px]"><IBucket /></Slot>
        <Slot c="w-[10px]"><Drop /></Slot>
        <Slot c="ml-[4px]"><IPattern /></Slot>
        <Slot c="w-[8px]"><Drop /></Slot>
        <Sep c="ml-[4px]" />
        <Slot c="ml-[2px]"><ILock /></Slot>
        <span className="ml-[1px]">シ</span>
      </div>

      {/* formula bar */}
      <div className="h-[19px] shrink-0 flex items-stretch border-b-2 border-b-[#404040]">
        <div className="w-[94px] bg-white flex items-center justify-center font-['Liberation_Serif'] text-[12px] tracking-[1px] shrink-0">D7</div>
        <div className="w-[16px] bg-[#d4d0c8] border border-t-white border-l-white border-r-[#404040] border-b-[#404040] flex items-center justify-center shrink-0"><Drop /></div>
        <div className="w-[53px] flex items-center justify-end pr-[5px] shrink-0 font-['Liberation_Sans'] font-bold text-[13px]">=</div>
        <div className="flex-1 bg-white flex items-center pl-[11px] font-['Liberation_Serif'] text-[12px] tracking-[1px]">101</div>
      </div>

      <Sheet />
    </div>
  );
}
